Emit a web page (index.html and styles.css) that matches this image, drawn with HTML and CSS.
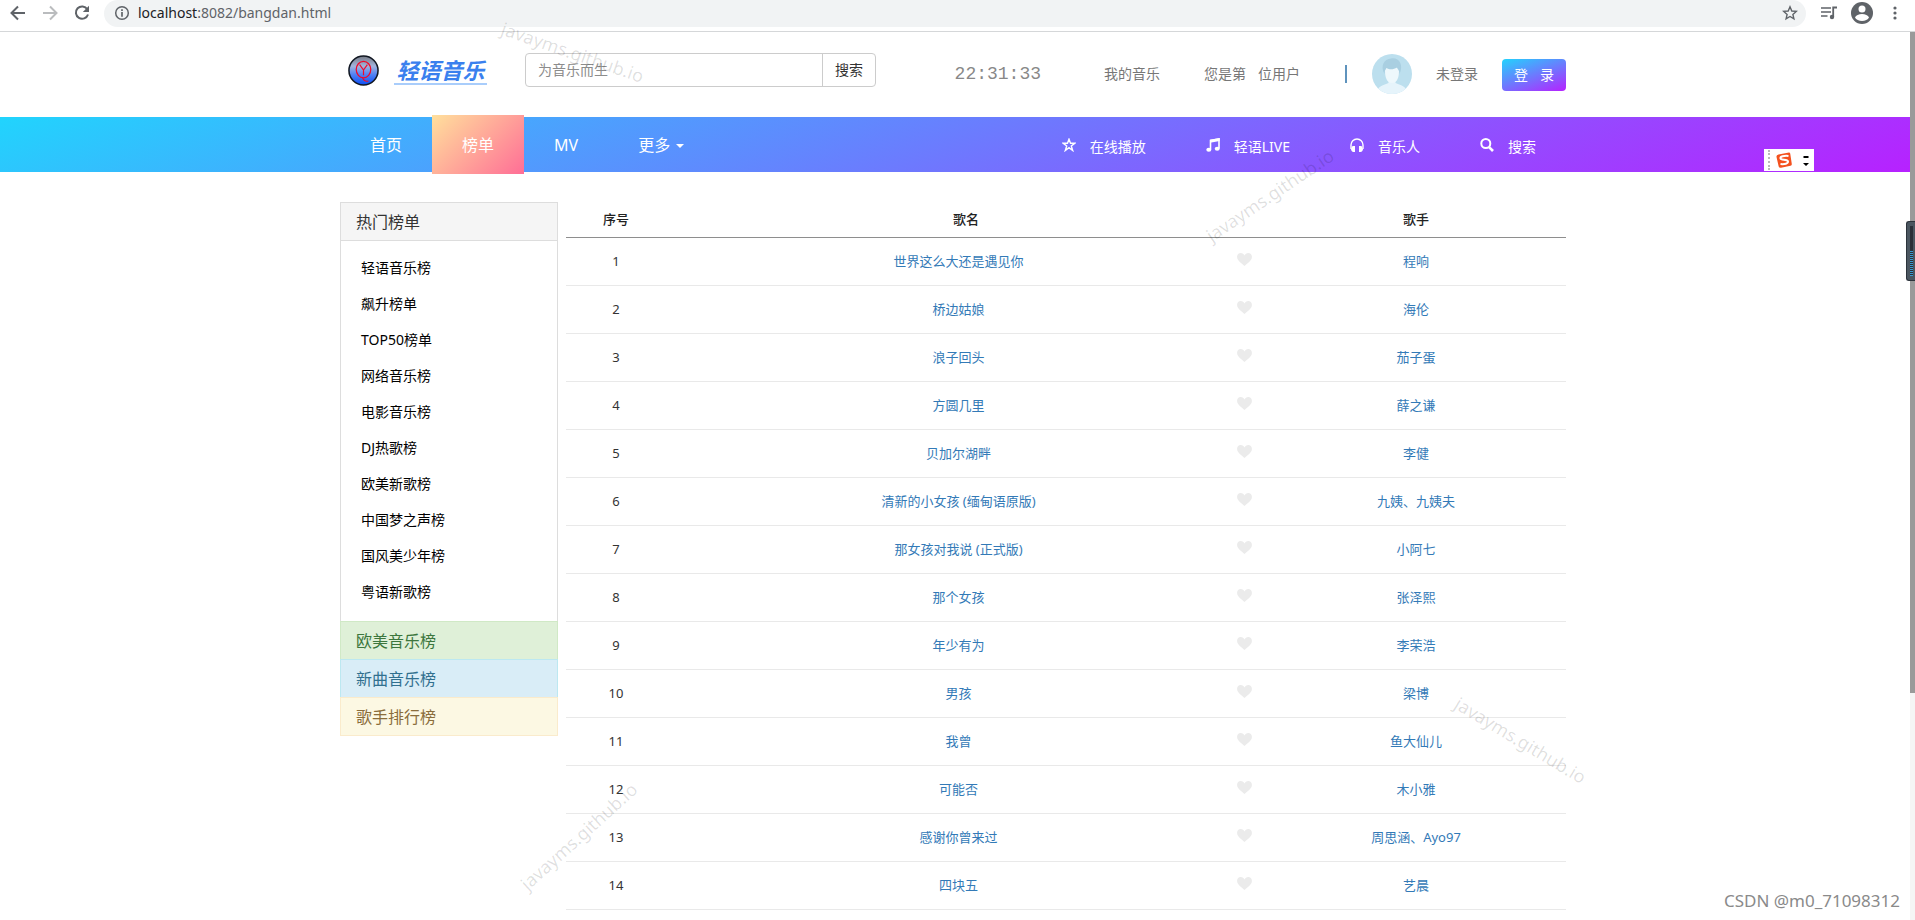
FILE: index.html
```html
<!DOCTYPE html>
<html lang="zh-CN">
<head>
    <meta charset="UTF-8">
    <meta name="viewport" content="width=device-width, initial-scale=1.0">
    <title>榜单</title>
    <link rel="stylesheet" href="styles.css">
</head>
<body>
    <svg class="sprite" aria-hidden="true">
        <symbol id="heart" viewBox="0 0 16 14">
            <path d="M8 14C6 11.5 0 8.500 0 4.200C0 1.800 1.700 0 4 0C5.800 0 7.300 1 8 2.600C8.700 1 10.200 0 12 0C14.300 0 16 1.800 16 4.200C16 8.500 10 11.500 8 14Z"/>
        </symbol>
    </svg>

    <!-- browser bar -->
    <div class="toolbar">
        <div class="tool-left">
            <svg class="icon" viewBox="0 0 16 16"><path d="M15 8H2M8 1.500L1.500 8L8 14.500" fill="none" stroke="#5f6368" stroke-width="2"/></svg>
            <svg class="icon" viewBox="0 0 16 16"><path d="M1 8H14M8 1.500L14.500 8L8 14.500" fill="none" stroke="#babcbe" stroke-width="2"/></svg>
            <svg class="icon" viewBox="0 0 16 16"><path d="M13.300 4.200A6.200 6.200 0 1 0 14 9.500" fill="none" stroke="#5f6368" stroke-width="2"/><path d="M15 .8V7H8.800Z" fill="#5f6368"/></svg>
        </div>
        <div class="address">
            <svg class="icon" viewBox="0 0 16 16"><circle cx="8" cy="8" r="6.300" fill="none" stroke="#5f6368" stroke-width="1.500"/><path d="M8 7V11.700M8 4.200V5.900" stroke="#5f6368" stroke-width="1.700"/></svg>
            <p class="url"><span class="host">localhost</span>:8082/bangdan.html</p>
            <svg class="icon" viewBox="0 0 16 16"><path d="M8 1.800L9.800 6L14.300 6.400L10.900 9.400L11.900 13.900L8 11.500L4.100 13.900L5.100 9.400L1.700 6.400L6.200 6Z" fill="none" stroke="#5f6368" stroke-width="1.400"/></svg>
        </div>
        <div class="tool-right">
            <svg class="icon" viewBox="0 0 16 16"><path d="M0 3H10M0 7H10M0 11H6.500" stroke="#5f6368" stroke-width="1.600"/><path d="M12.200 12V2.500H16" fill="none" stroke="#5f6368" stroke-width="1.800"/><circle cx="11" cy="12" r="2.200" fill="#5f6368"/></svg>
            <svg class="icon-user" viewBox="0 0 22 22"><circle cx="11" cy="11" r="11" fill="#5f6368"/><circle cx="11" cy="7" r="3.500" fill="#fff"/><path d="M4 15.500C5.500 10.800 16.500 10.800 18 15.500C16 20 6 20 4 15.500Z" fill="#fff"/></svg>
            <svg class="icon" viewBox="0 0 16 16"><circle cx="8" cy="3" r="1.600" fill="#5f6368"/><circle cx="8" cy="8" r="1.600" fill="#5f6368"/><circle cx="8" cy="13" r="1.600" fill="#5f6368"/></svg>
        </div>
    </div>

    <div class="viewport">
        <div class="page">
            <header class="container header">
                <a class="brand" href="#">
                    <svg class="logo" viewBox="0 0 32 32">
                        <defs>
                            <linearGradient id="ball" x1="0" y1="0" x2="0" y2="1">
                                <stop offset="0" stop-color="#777b85"/>
                                <stop offset=".35" stop-color="#a3b4dc"/>
                                <stop offset=".65" stop-color="#4e80f5"/>
                                <stop offset="1" stop-color="#0a4df5"/>
                            </linearGradient>
                        </defs>
                        <circle cx="16" cy="16" r="15" fill="url(#ball)" stroke="#111722" stroke-width="1.600"/>
                        <ellipse cx="16" cy="15" rx="7.500" ry="8.500" fill="none" stroke="#f00a2a" stroke-width="1.300"/>
                        <path d="M12 10L16 15.500L20 10M16 15.500V21M15 23C16 27 18.500 27.500 21 26.800" fill="none" stroke="#f00a2a" stroke-width="1.200"/>
                    </svg>
                    <span class="brand-name">轻语音乐</span>
                </a>
                <form class="search">
                    <input class="search-input" type="text" placeholder="为音乐而生" aria-label="搜索">
                    <button class="search-button" type="button">搜索</button>
                </form>
                <div class="user">
                    <span class="clock">22:31:33</span>
                    <a class="my-music" href="#">我的音乐</a>
                    <span class="visitor"><span>您是第</span><span>位用户</span></span>
                    <span class="divider"></span>
                    <svg class="avatar" viewBox="0 0 40 40">
                        <defs><clipPath id="round"><circle cx="20" cy="20" r="20"/></clipPath></defs>
                        <g clip-path="url(#round)">
                            <rect width="40" height="40" fill="#bcdfee"/>
                            <path d="M4 40C5 32 12 31 16.500 29V24H23.500V29C28 31 35 32 36 40Z" fill="#e6f4fb"/>
                            <path d="M13 17C13 26 16.500 29 20 29C23.500 29 27 26 27 17L23 11H15Z" fill="#eef8fc"/>
                            <path d="M12.500 20C8 12 12 5 19 4.500C27 3 32 11 27.500 20C27.500 17 26.500 15 25 13.500C21 16 17 15.500 14.500 14C13 15.500 12.500 17 12.500 20Z" fill="#a9cfe1"/>
                        </g>
                    </svg>
                    <span class="status">未登录</span>
                    <button class="login" type="button"><span>登</span><span>录</span></button>
                </div>
            </header>

            <nav class="nav">
                <div class="container nav-inner">
                    <a class="nav-link" href="#">首页</a>
                    <a class="nav-link active" href="#">榜单</a>
                    <a class="nav-link" href="#">MV</a>
                    <button class="nav-link nav-more" type="button">更多<span class="caret"></span></button>
                    <div class="nav-right">
                        <a class="nav-tool" href="#">
                            <svg class="nav-icon" viewBox="0 0 14 14"><path d="M7 1.200L8.500 5.300H12.800L9.300 7.900L10.700 12.500L7 9.700L3.300 12.500L4.700 7.900L1.200 5.300H5.500Z" fill="none" stroke="#fff" stroke-width="1.400"/></svg>
                            在线播放
                        </a>
                        <a class="nav-tool" href="#">
                            <svg class="nav-icon" viewBox="0 0 14 14"><path d="M4.500 11.500V2.500L13 1V10.500" fill="none" stroke="#fff" stroke-width="1.600"/><path d="M4 1.800L13.700 0V3L4 4.800Z" fill="#fff"/><ellipse cx="2.800" cy="11.800" rx="2.500" ry="2" fill="#fff"/><ellipse cx="11.200" cy="10.800" rx="2.500" ry="2" fill="#fff"/></svg>
                            轻语LIVE
                        </a>
                        <a class="nav-tool" href="#">
                            <svg class="nav-icon" viewBox="0 0 14 14"><path d="M1 11V7A6 6 0 0 1 13 7V11" fill="none" stroke="#fff" stroke-width="1.400"/><path d="M2.500 8H5V14H3.500C2 14 1 12.500 1 11ZM11.500 8H9V14H10.500C12 14 13 12.500 13 11Z" fill="#fff"/></svg>
                            音乐人
                        </a>
                        <a class="nav-tool" href="#">
                            <svg class="nav-icon" viewBox="0 0 14 14"><circle cx="5.800" cy="5.500" r="4.500" fill="none" stroke="#fff" stroke-width="2"/><path d="M8.800 8.800L13 13" stroke="#fff" stroke-width="2.600"/></svg>
                            搜索
                        </a>
                    </div>
                </div>
            </nav>

            <main class="container main">
                <aside class="sidebar">
                    <h2 class="panel-title">热门榜单</h2>
                    <ul class="panel-list">
                        <li><a href="#">轻语音乐榜</a></li>
                        <li><a href="#">飙升榜单</a></li>
                        <li><a href="#">TOP50榜单</a></li>
                        <li><a href="#">网络音乐榜</a></li>
                        <li><a href="#">电影音乐榜</a></li>
                        <li><a href="#">DJ热歌榜</a></li>
                        <li><a href="#">欧美新歌榜</a></li>
                        <li><a href="#">中国梦之声榜</a></li>
                        <li><a href="#">国风美少年榜</a></li>
                        <li><a href="#">粤语新歌榜</a></li>
                    </ul>
                    <h2 class="panel-title green">欧美音乐榜</h2>
                    <h2 class="panel-title blue">新曲音乐榜</h2>
                    <h2 class="panel-title yellow">歌手排行榜</h2>
                </aside>

                <table class="songs">
                    <thead>
                        <tr><th class="col-no">序号</th><th class="col-name">歌名</th><th class="col-singer">歌手</th></tr>
                    </thead>
                    <tbody>
                        <tr><td>1</td><td><button class="like" type="button" aria-label="收藏"><svg><use href="#heart"/></svg></button><a href="#">世界这么大还是遇见你</a></td><td><a href="#">程响</a></td></tr>
                        <tr><td>2</td><td><button class="like" type="button" aria-label="收藏"><svg><use href="#heart"/></svg></button><a href="#">桥边姑娘</a></td><td><a href="#">海伦</a></td></tr>
                        <tr><td>3</td><td><button class="like" type="button" aria-label="收藏"><svg><use href="#heart"/></svg></button><a href="#">浪子回头</a></td><td><a href="#">茄子蛋</a></td></tr>
                        <tr><td>4</td><td><button class="like" type="button" aria-label="收藏"><svg><use href="#heart"/></svg></button><a href="#">方圆几里</a></td><td><a href="#">薛之谦</a></td></tr>
                        <tr><td>5</td><td><button class="like" type="button" aria-label="收藏"><svg><use href="#heart"/></svg></button><a href="#">贝加尔湖畔</a></td><td><a href="#">李健</a></td></tr>
                        <tr><td>6</td><td><button class="like" type="button" aria-label="收藏"><svg><use href="#heart"/></svg></button><a href="#">清新的小女孩 (缅甸语原版)</a></td><td><a href="#">九姨、九姨夫</a></td></tr>
                        <tr><td>7</td><td><button class="like" type="button" aria-label="收藏"><svg><use href="#heart"/></svg></button><a href="#">那女孩对我说 (正式版)</a></td><td><a href="#">小阿七</a></td></tr>
                        <tr><td>8</td><td><button class="like" type="button" aria-label="收藏"><svg><use href="#heart"/></svg></button><a href="#">那个女孩</a></td><td><a href="#">张泽熙</a></td></tr>
                        <tr><td>9</td><td><button class="like" type="button" aria-label="收藏"><svg><use href="#heart"/></svg></button><a href="#">年少有为</a></td><td><a href="#">李荣浩</a></td></tr>
                        <tr><td>10</td><td><button class="like" type="button" aria-label="收藏"><svg><use href="#heart"/></svg></button><a href="#">男孩</a></td><td><a href="#">梁博</a></td></tr>
                        <tr><td>11</td><td><button class="like" type="button" aria-label="收藏"><svg><use href="#heart"/></svg></button><a href="#">我曾</a></td><td><a href="#">鱼大仙儿</a></td></tr>
                        <tr><td>12</td><td><button class="like" type="button" aria-label="收藏"><svg><use href="#heart"/></svg></button><a href="#">可能否</a></td><td><a href="#">木小雅</a></td></tr>
                        <tr><td>13</td><td><button class="like" type="button" aria-label="收藏"><svg><use href="#heart"/></svg></button><a href="#">感谢你曾来过</a></td><td><a href="#">周思涵、Ayo97</a></td></tr>
                        <tr><td>14</td><td><button class="like" type="button" aria-label="收藏"><svg><use href="#heart"/></svg></button><a href="#">四块五</a></td><td><a href="#">艺晨</a></td></tr>
                    </tbody>
                </table>
            </main>
        </div>
        <div class="scrollbar"><div class="thumb"></div></div>
    </div>

    <!-- floating things -->
    <div class="ime">
        <span class="grip"></span>
        <svg class="ime-logo" viewBox="0 0 16 16"><path d="M2.500 2.500L13 .5Q14 .5 14.200 1.500L15.800 12Q16 13.500 14.500 13.800L5 15.800Q3 16 2.700 14.500L.5 5Q.2 3 2.500 2.500Z" fill="#f4511e"/><path d="M12.500 4C8 3.500 4 4.500 4.500 6.500C5 8.500 11.500 7 12 9.500C12.300 11.500 8.500 12.500 4.500 12" fill="none" stroke="#fff" stroke-width="2"/></svg>
        <svg class="ime-menu" viewBox="0 0 6 11"><path d="M0.500 1H5.500V3H0.500ZM0 8H6L3 11Z"/></svg>
    </div>
    <div class="meter"><span class="meter-bar"></span></div>
    <span class="mark mark-1">javayms.github.io</span>
    <span class="mark mark-2">javayms.github.io</span>
    <span class="mark mark-3">javayms.github.io</span>
    <span class="mark mark-4">javayms.github.io</span>
    <span class="credit">CSDN @m0_71098312</span>
</body>
</html>
```

FILE: styles.css
```css
* {
    box-sizing: border-box;
}

body {
    position: relative;
    display: flex;
    flex-direction: column;
    min-height: 100vh;
    margin: 0;
    overflow: hidden;
    background-color: #fff;
    color: #333;
    font-family: "Noto Sans", "Noto Sans CJK SC", sans-serif;
    font-size: 14px;
    line-height: 20px;
}

a {
    color: inherit;
    text-decoration: none;
}

button,
input {
    font: inherit;
    color: inherit;
    padding: 0;
    margin: 0;
    border: none;
    background: none;
}

button {
    cursor: pointer;
}

svg {
    display: block;
    flex: none;
}

.sprite {
    position: absolute;
    width: 0;
    height: 0;
}

/* browser bar */
.toolbar {
    display: flex;
    align-items: flex-start;
    height: 32px;
    border-bottom: 1px solid #d5d7d9;
}

.tool-left,
.tool-right {
    display: flex;
    align-items: center;
    gap: 16px;
    height: 26px;
    padding: 0 14px 0 10px;
}

.tool-right {
    gap: 14px;
    padding: 0 12px 0 15px;
}

.icon {
    width: 16px;
    height: 16px;
}

.icon-user {
    width: 22px;
    height: 22px;
}

.address {
    display: flex;
    flex: 1;
    align-items: center;
    gap: 8px;
    height: 27px;
    padding: 0 8px 2px 10px;
    background-color: #f1f3f4;
    border-radius: 14px;
}

.url {
    flex: 1;
    margin: 0;
    color: #5f6368;
    font-size: 14px;
}

.host {
    color: #202124;
}

/* page */
.viewport {
    display: flex;
    flex: 1;
}

.page {
    flex: 1;
}

.container {
    max-width: 1230px;
    margin: 0 auto;
    padding-right: 4px;
}

.header {
    display: flex;
    align-items: center;
    height: 85px;
}

.brand {
    display: flex;
    align-items: center;
    gap: 15px;
    margin: 0 38px 8px 8px;
}

.logo {
    width: 31px;
    height: 31px;
}

.brand-name {
    width: 93px;
    border-bottom: 2px solid #a9cdfb;
    color: #3a80ee;
    font-size: 22px;
    font-style: italic;
    font-weight: bold;
    line-height: 26px;
    text-align: center;
}

.search {
    display: flex;
    width: 351px;
    height: 34px;
    margin-bottom: 10px;
    border: 1px solid #ccc;
    border-radius: 4px;
}

.search-input {
    flex: 1;
    min-width: 0;
    padding: 0 12px;
}

.search-input::placeholder {
    color: #8c8c8c;
    opacity: 1;
}

.search-button {
    width: 53px;
    border-left: 1px solid #ccc;
}

.user {
    display: flex;
    align-items: center;
    margin-bottom: 2px;
    margin-left: auto;
    color: #777;
}

.clock {
    color: #888;
    font-family: "Liberation Mono", monospace;
    font-size: 18px;
}

.my-music {
    margin: 0 44px 0 63px;
}

.visitor {
    display: flex;
    gap: 12px;
}

.divider {
    width: 2px;
    height: 18px;
    margin: 0 25px 0 45px;
    background-color: #5f93bd;
}

.avatar {
    width: 40px;
    height: 40px;
}

.status {
    margin: 0 24px;
}

.login {
    display: flex;
    align-items: center;
    justify-content: center;
    gap: 12px;
    width: 64px;
    height: 32px;
    margin-top: 2px;
    border-radius: 4px;
    background-image: linear-gradient(160deg, #21d4fd, #b721ff);
    color: #fff;
}

/* nav */
.nav {
    background-image: linear-gradient(160deg, #21d4fd, #b721ff);
    color: #fff;
}

.nav-inner {
    display: flex;
    align-items: center;
    height: 55px;
}

.nav-link {
    padding: 2px 30px 0;
    font-size: 16px;
    line-height: 57px;
}

.active {
    background-image: linear-gradient(135deg, #ffe09c, #ff6e96);
}

.nav-more {
    display: flex;
    align-items: center;
    gap: 6px;
}

.caret {
    border-top: 4px solid #fff;
    border-right: 4px solid transparent;
    border-left: 4px solid transparent;
}

.nav-right {
    display: flex;
    margin-left: auto;
}

.nav-tool {
    display: flex;
    align-items: center;
    gap: 14px;
    padding: 4px 30px 0;
}

.nav-icon {
    width: 14px;
    height: 14px;
    margin-bottom: 4px;
}

/* content */
.main {
    display: flex;
    align-items: flex-start;
    gap: 8px;
    padding-top: 30px;
}

.sidebar {
    width: 218px;
}

.panel-title {
    height: 39px;
    margin: 0;
    padding: 0 15px;
    border: 1px solid #ddd;
    background-color: #f5f5f5;
    font-size: 16px;
    font-weight: normal;
    line-height: 38px;
}

.panel-list {
    margin: 0;
    padding: 9px 20px 11px;
    border: 1px solid #ddd;
    border-width: 0 1px;
    color: #000;
    line-height: 36px;
    list-style: none;
}

.green {
    border-color: #d0e9c6;
    background-color: #dff0d8;
    color: #3c763d;
}

.blue {
    margin-top: -1px;
    border-color: #bce8f1;
    background-color: #d9edf7;
    color: #31708f;
}

.yellow {
    margin-top: -1px;
    border-color: #faebcc;
    background-color: #fcf8e3;
    color: #8a6d3b;
}

.songs {
    flex: 1;
    table-layout: fixed;
    border-spacing: 0;
    font-size: 13px;
    text-align: center;
}

.songs th {
    height: 36px;
    padding: 0 0 2px;
    border-bottom: 1px solid #8e8e8e;
    color: #222;
    font-weight: 500;
}

.songs td {
    height: 48px;
    padding: 0 14px 2px;
    border-bottom: 1px solid #e9e9e9;
}

.songs a {
    color: #337ab7;
}

.col-no {
    width: 10%;
}

.col-name {
    width: 60%;
}

.col-singer {
    width: 30%;
}

.like {
    float: right;
    width: 15px;
    padding-top: 2px;
}

.like svg {
    width: 15px;
    height: 13px;
    fill: #ebebeb;
}

.scrollbar {
    width: 5px;
    background-color: #f5f5f5;
}

.thumb {
    height: 661px;
    background-color: #9a9a9a;
}

/* floating input method bar */
.ime {
    position: absolute;
    top: 149px;
    right: 101px;
    display: flex;
    align-items: center;
    width: 50px;
    height: 22px;
    padding: 0 5px 0 4px;
    background-color: #fff;
}

.grip {
    height: 20px;
    border-left: 2px dotted #bbb;
}

.ime-logo {
    width: 16px;
    height: 16px;
    margin: 0 11px 0 6px;
}

.ime-menu {
    width: 6px;
    height: 11px;
}

.meter {
    position: absolute;
    top: 221px;
    right: 0;
    width: 9px;
    height: 60px;
    padding: 4px 2px 4px 3px;
    border: 1px solid #2c333b;
    border-right: none;
    border-radius: 3px 0 0 3px;
    background-color: #4b5660;
}

.meter-bar {
    display: block;
    height: 50px;
    background-color: #2b3039;
    background-image: repeating-linear-gradient(#3a9ad0 0 1px, #2b3039 1px 2px);
    background-position: 0 25px;
    background-repeat: no-repeat;
}

.mark {
    position: absolute;
    color: rgba(0, 0, 0, 0.13);
    font-size: 18px;
    line-height: 24px;
    pointer-events: none;
}

.mark-1 {
    top: 40px;
    left: 498px;
    transform: rotate(19deg);
}

.mark-2 {
    top: 183px;
    left: 1195px;
    transform: rotate(-34deg);
}

.mark-3 {
    top: 728px;
    left: 1446px;
    transform: rotate(31deg);
}

.mark-4 {
    top: 824px;
    left: 504px;
    transform: rotate(-42deg);
}

.credit {
    position: absolute;
    right: 15px;
    bottom: 9px;
    color: #8a8a8a;
    font-size: 17px;
}
```
